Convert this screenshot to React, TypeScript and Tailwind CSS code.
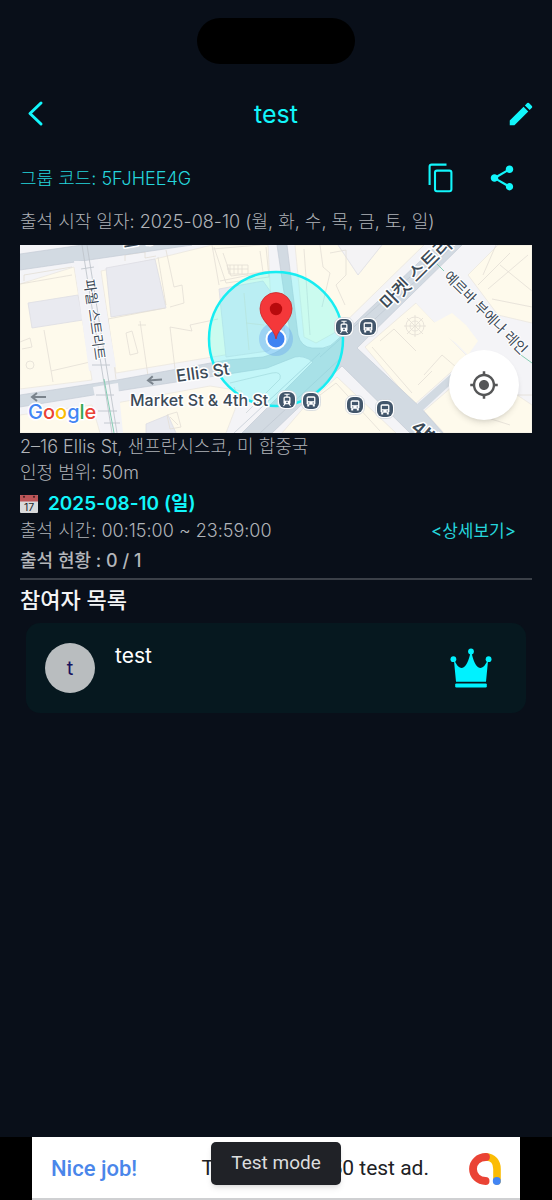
import React from "react";
import { MdEdit, MdShare, MdMyLocation } from "react-icons/md";

const sans = "font-['Inter','Noto_Sans_CJK_KR',sans-serif]";

function CopyIcon() {
  return (
    <svg viewBox="0 0 32 32" className="size-8" fill="none" stroke="#12f6fb" strokeWidth="2.1" aria-hidden="true">
      <path d="M3.600 23V4.600Q3.600 2.600 5.600 2.600H20.500" />
      <rect x="9" y="8.6" width="16.4" height="20.6" rx="2" />
    </svg>
  );
}

function CrownIcon() {
  return (
    <svg viewBox="0 0 42 40" className="h-10 w-[42px]" fill="#00f2ff" role="img" aria-label="방장">
      <circle cx="21" cy="3.4" r="2.9" />
      <circle cx="3.4" cy="11.2" r="2.9" />
      <circle cx="38.6" cy="11.2" r="2.9" />
      <path d="M3.800 11 C6 16 8.500 20 11.800 20 C16 19.500 19 12 20.300 5 H21.700 C23 12 26 19.500 30.200 20 C33.500 20 36 16 38.200 11 L36 33.800 H6 Z" />
      <rect x="5.2" y="35.4" width="31.6" height="4" rx="1.2" />
    </svg>
  );
}

function CalendarIcon() {
  return (
    <svg viewBox="0 0 18 18" className="size-[18px]" aria-hidden="true">
      <rect width="18" height="18" rx="1" fill="#d9dadb" />
      <path d="M1 0H17Q18 0 18 1V6.400H0V1Q0 0 1 0Z" fill="#bd5558" />
      <circle cx="4" cy="1.8" r="1.1" fill="#4c2426" />
      <circle cx="14" cy="1.8" r="1.1" fill="#4c2426" />
      <text x="9" y="16" textAnchor="middle" fontSize="10.5" fontFamily="Inter" fill="#26282c">17</text>
    </svg>
  );
}

function AdMobIcon() {
  return (
    <svg viewBox="0 0 34 34" className="size-[34px]" fill="none" strokeLinecap="round" aria-hidden="true">
      <path d="M18 5 C25 5 29 10.500 29 17 V29" stroke="#fbbc04" strokeWidth="7.6" />
      <path d="M18 5 C10.500 5 5 10.400 5 17 C5 23.600 10.500 29 17.600 29" stroke="#ea4335" strokeWidth="7.8" />
      <circle cx="28.8" cy="29" r="4" fill="#4285f4" />
    </svg>
  );
}

type StopKind = "bus" | "tram";
const stops: { x: number; y: number; kind: StopKind }[] = [
  { x: 324, y: 82, kind: "tram" },
  { x: 348, y: 82, kind: "bus" },
  { x: 267, y: 155, kind: "tram" },
  { x: 291, y: 156, kind: "bus" },
  { x: 335, y: 160, kind: "bus" },
  { x: 365, y: 164, kind: "bus" },
];

function TransitStop({ x, y, kind }: { x: number; y: number; kind: StopKind }) {
  return (
    <g transform={`translate(${x} ${y})`}>
      <rect x="-9.5" y="-9.5" width="19" height="19" rx="7" fill="#fff" stroke="#c3cad2" strokeWidth="0.6" />
      <rect x="-8" y="-8" width="16" height="16" rx="6" fill="#42566b" />
      {kind === "bus" ? (
        <>
          <rect x="-4.4" y="-4.8" width="8.8" height="8.6" rx="1.6" fill="#fff" />
          <rect x="-3.1" y="-3.2" width="6.2" height="3.4" fill="#42566b" />
          <path d="M-3.800 3.500h2v2h-2zM1.800 3.500h2v2h-2z" fill="#fff" />
          <path d="M-2.900 1.500h1.300v1h-1.300zM1.600 1.500h1.300v1h-1.300z" fill="#42566b" />
        </>
      ) : (
        <>
          <path d="M-2.600 -5.800H2.600M0 -5.800V-3" stroke="#fff" strokeWidth="1.1" />
          <rect x="-3.5" y="-3.6" width="7" height="7.8" rx="1.5" fill="#fff" />
          <rect x="-2.2" y="-2.2" width="4.4" height="2.9" fill="#42566b" />
          <circle cx="0" cy="2.3" r="0.9" fill="#42566b" />
          <path d="M-2 4L-3.600 6M2 4L3.600 6" stroke="#fff" strokeWidth="1.1" />
        </>
      )}
    </g>
  );
}

function StreetMap() {
  const label = {
    fill: "#3c4a57",
    stroke: "#ffffff",
    strokeWidth: 3,
    paintOrder: "stroke" as const,
    strokeLinejoin: "round" as const,
    fontFamily: "Inter, 'Noto Sans CJK KR', sans-serif",
  };
  return (
    <svg viewBox="0 0 512 188" preserveAspectRatio="xMidYMid slice" className="block w-full" role="img" aria-label="출석 위치 지도">
      <rect width="512" height="188" fill="#f4f4f7" />
      <g fill="#fefaec" stroke="#ebe7df" strokeWidth="0.8">
        <path d="M0 39L54 22L72 135L0 144Z" />
        <path d="M81 26L135 14L192 0H248L253 102L96 128Z" />
        <path d="M275 0H340L404 0L314 88L296 98L284 92Z" />
        <path d="M345 102L396 58L448 112L394 160Z" />
        <path d="M448 30L478 0H512V78L478 70Z" />
        <path d="M0 170L72 160L80 188H0Z" />
        <path d="M96 158L190 141L222 146L206 188H102Z" />
        <path d="M286 160L317 132L376 188H262Z" />
        <path d="M404 166L455 122L512 160V188H424Z" />
      </g>
      <path d="M396 58L430 24L500 94L470 112L448 112Z" fill="#f4f4f7" />
      <path d="M410 80L432 68L446 80L458 96L448 110L436 98Z" fill="#fefaec" />
      <g fill="#e9eaf0" stroke="#dddde3" strokeWidth="0.8">
        <path d="M8 58L58 50L63 75L12 83Z" />
        <path d="M86 23L135 14L146 63L91 72Z" />
        <path d="M126 179L148 170L156 188H126Z" />
        <path d="M199 44L243 36L260 60L266 92L248 106L206 112Z" />
        <path d="M318 0H362L338 30Z" fill="#f4f3f5" />
      </g>
      <g fill="none" stroke="#e3ded5" strokeWidth="0.8">
        <path d="M0 39L52 30M4 36V30L52 22M24 85L33 137M31 126L70 117M0 97L10 93L12 102L2 104M120 76L128 131M96 134L88 74L145 63M106 88L112 86L118 108L110 110ZM118 80H126" />
        <path d="M105 16V10L125 7V13L136 11M138 12L146 60M150 62L164 58L162 40L154 42L146 5M150 82L172 86L170 80L198 74M150 82L155 124M192 0L199 40M224 48L229 105M226 78L244 80M192 4L240 0M200 36L250 26" />
        <path d="M194 2L206 38L249 32L246 2M203 8L211 31L243 27L240 6M207 20H228V29H209ZM210 20V29M214 20V29M218 20V29M222 20V29M207 24H228" />
        <path d="M284 4L290 90M300 0L303 22L310 28L302 62M310 8L326 5V30L316 40L325 60M352 102L392 148M360 96L374 84L396 106M404 130L422 110L436 122M398 140L412 126M458 40L490 8M468 44L508 10M480 20L512 46M463 30L476 0M472 54L512 62M462 150H512M440 164L490 180" />
        <circle cx="395" cy="81" r="9" />
        <circle cx="395" cy="81" r="5" />
        <path d="M384 81H406M395 70V92M387 73L403 89M403 73L387 89" />
        <circle cx="10" cy="120" r="4" />
        <path d="M147 170L157 167L161 182L150 184ZM150 172L158 180M300 150L316 138L360 186" />
        <path d="M210 138L252 128Q262 126 260 134L226 168M214 142L220 156" stroke="#cfd5d8" />
      </g>
      <g fill="#d2dae2" stroke="#c4ccd6" strokeWidth="0.7">
        <path d="M0 9L62 0H172L0 25Z" />
        <path d="M257 0H267L278 90Q281 102 292 103H303Q311 102 317 95L417 0H442L337 103L400 162L423 188H390L322 121L252 188H222L293 117Q284 110 275 112L247 123L98 146L0 162V150L97 135L207 115L243 112Q270 105 270 88Z" />
        <path d="M396 160L450 112L454 118L402 166Z" stroke="none" />
      </g>
      <path d="M214 188L300 108M300 112L426 0M240 188L322 112M434 0L340 88" fill="none" stroke="#bec7d1" strokeWidth="0.7" />
      <path d="M54 16L69 126L96 122L78 16ZM73 142L82 188H103L98 138Z" fill="#f3f3f7" />
      <path d="M62 0L92 188M67 0L97 188M61 24L74 22M72 120H90M76 150H94M78 166H97M84 178H100" fill="none" stroke="#bfc5cc" strokeWidth="0.9" />
      <path d="M84 134L94 188M415 17L424 26M494 105L512 118" stroke="#86cdb3" strokeWidth="1" />

      <text {...label} x="104" y="3" fontSize="16" fontWeight="600" transform="rotate(-10 104 3)">고에스</text>
      <text {...label} strokeWidth="2" x="64" y="35" fontSize="14" fontWeight="400" transform="rotate(82 64 35)">파월 스트리트</text>

      <circle cx="256" cy="94" r="67" fill="#00ffff" fillOpacity="0.2" stroke="#18edf2" strokeWidth="2.5" />

      <path d="M142 135H128M133 131L128 135L133 139" transform="rotate(-4 135 135)" fill="none" stroke="#7a838c" strokeWidth="2" />
      <path d="M26 152H12M17 148L12 152L17 156" fill="none" stroke="#7a838c" strokeWidth="2" />
      <text {...label} x="157" y="137" fontSize="17" fontWeight="500" transform="rotate(-8 157 137)">Ellis St</text>
      <text {...label} x="110" y="161" fontSize="16" fontWeight="500">Market St &amp; 4th St</text>
      <text {...label} x="368" y="66" fontSize="19" fontWeight="500" transform="rotate(-45 368 66)">마켓 스트리트</text>
      <text {...label} strokeWidth="2" x="423" y="32" fontSize="14" fontWeight="400" transform="rotate(45 423 32)">예르바 부에나 레인</text>
      <text {...label} x="390" y="184" fontSize="18" fontWeight="600" transform="rotate(40 390 184)">4번가</text>

      {stops.map((s) => (
        <TransitStop key={`${s.x}-${s.y}`} {...s} />
      ))}

      <circle cx="256" cy="94" r="17" fill="#4285f4" fillOpacity="0.25" />
      <circle cx="256" cy="94" r="10.5" fill="#fff" />
      <circle cx="256" cy="94" r="8.5" fill="#4083f2" />
      <path d="M256 94C254 82 240 77 240 63.500A16 16 0 0 1 272 63.500C272 77 258 82 256 94Z" fill="#f4383a" stroke="#c9282a" strokeWidth="0.8" />
      <circle cx="256" cy="64" r="6.2" fill="#b80a0d" />

      <text x="8" y="174" fontSize="20" fontWeight="500" fontFamily="Inter, sans-serif" stroke="#fff" strokeWidth="3" paintOrder="stroke">
        <tspan fill="#4285f4">G</tspan>
        <tspan fill="#ea4335">o</tspan>
        <tspan fill="#fbbc04">o</tspan>
        <tspan fill="#4285f4">g</tspan>
        <tspan fill="#34a853">l</tspan>
        <tspan fill="#ea4335">e</tspan>
      </text>
    </svg>
  );
}

export default function App() {
  return (
    <div className={`flex min-h-screen flex-col bg-[#090f19] text-[#b0b3b8] ${sans}`}>
      <div className="flex justify-center pt-[18px]">
        <div className="h-[46px] w-[158px] rounded-full bg-black" />
      </div>

      <header className="mt-5 grid grid-cols-[1fr_auto_1fr] items-center px-4 text-[#12f6fb]">
        <button type="button" aria-label="뒤로" className="flex size-10 items-center justify-center justify-self-start">
          <svg viewBox="0 0 24 28" className="h-7 w-6" fill="none" stroke="currentColor" strokeWidth="3" strokeLinecap="round" strokeLinejoin="round" aria-hidden="true">
            <path d="M17 3L6 13.500L17 24" />
          </svg>
        </button>
        <h1 className="text-[25px] leading-[60px]">test</h1>
        <button type="button" aria-label="편집" className="flex size-[30px] items-center justify-center justify-self-end">
          <MdEdit className="size-[30px]" />
        </button>
      </header>

      <main className="flex flex-col px-5">
        <div className="mt-3 flex h-11 items-center justify-between text-[#12f6fb]">
          <p className="text-[18px] font-light text-[#25d5dc]">그룹 코드: 5FJHEE4G</p>
          <div className="flex items-center gap-7 pr-[14px]">
            <button type="button" aria-label="코드 복사" className="flex size-8 items-center justify-center">
              <CopyIcon />
            </button>
            <button type="button" aria-label="공유" className="flex size-8 items-center justify-center">
              <MdShare className="size-[30px]" />
            </button>
          </div>
        </div>
        <p className="mt-[9px] text-[18px] leading-[26px] font-light">출석 시작 일자: 2025-08-10 (월, 화, 수, 목, 금, 토, 일)</p>

        <div className="relative mt-[10px]">
          <StreetMap />
          <button
            type="button"
            aria-label="내 위치"
            className="absolute right-[13px] bottom-[13px] flex size-[70px] items-center justify-center rounded-full bg-white text-[#555657] shadow-md"
          >
            <MdMyLocation className="size-[30px]" />
          </button>
        </div>

        <p className="mt-px text-[18px] leading-[26px] font-light">2–16 Ellis St, 샌프란시스코, 미 합중국</p>
        <p className="text-[18px] leading-[26px] font-light">인정 범위: 50m</p>
        <div className="mt-[5px] flex items-center gap-[10px]">
          <CalendarIcon />
          <h2 className="text-[19px] leading-[26px] font-semibold text-[#12f6fb]">2025-08-10 (일)</h2>
        </div>
        <div className="flex items-center justify-between pr-4">
          <p className="text-[18px] leading-[28px] font-light">출석 시간: 00:15:00 ~ 23:59:00</p>
          <a href="#detail" className="text-[17px] leading-[28px] text-[#25d5dc]">&lt;상세보기&gt;</a>
        </div>
        <p className="mt-[2px] text-[18px] leading-[28px] font-medium text-[#b4b6ba]">출석 현황 : 0 / 1</p>
        <hr className="mt-[3px] border-t-2 border-[#3b4048]" />

        <h2 className="mt-1 text-[22px] leading-[32px] font-medium text-[#f3f4f5]">참여자 목록</h2>
        <ul className="mt-[7px] px-[6px]">
          <li className="flex h-[90px] items-center rounded-[14px] bg-[#06181f] pr-[34px] pl-[19px]">
            <span className="flex size-[50px] items-center justify-center rounded-full bg-[#b9bdbf] text-[20px] text-[#17135e]">t</span>
            <span className="mb-6 ml-5 grow text-[21px] leading-6 text-white">test</span>
            <CrownIcon />
          </li>
        </ul>
      </main>

      <footer className="mt-auto flex justify-center bg-black px-8">
        <div className="relative flex h-[63px] w-full items-center border-b-2 border-[#cfd0d2] bg-white pt-[2px] pr-[18px] pl-[19px] font-['Roboto',sans-serif] text-[21px]">
          <span className="grow text-[22px] font-medium text-[#4a86ea]">Nice job!</span>
          <span className="text-[#202124]">This is a 320x50 test ad.</span>
          <span className="ml-[39px]">
            <AdMobIcon />
          </span>
          <div className="absolute top-[5px] left-1/2 flex h-[43px] w-[130px] -translate-x-1/2 items-center justify-center rounded-[5px] bg-[#202227] text-[19px] text-[#dcddde] shadow-md">
            Test mode
          </div>
        </div>
      </footer>
    </div>
  );
}
